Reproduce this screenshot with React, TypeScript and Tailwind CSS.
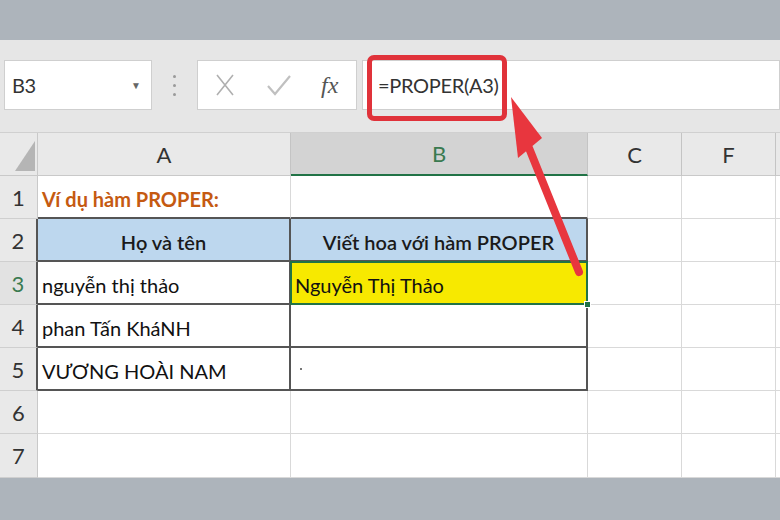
import React from "react";

const FONT = { fontFamily: "Lato, 'Noto Sans', 'Liberation Sans', sans-serif" };

const GRID = "border-[#d9d9d9]";

function ColHead({ label, active }: { label: string; active?: boolean }) {
  return (
    <div
      className={
        "flex items-center justify-center border-r border-[#c4c4c4] text-[22px] " +
        (active
          ? "bg-[#d3d3d3] text-[#3a7a50] border-b-2 border-b-[#217346]"
          : "bg-[#e9e9e9] text-[#333] border-b border-b-[#c9c9c9]")
      }
    >
      {label}
    </div>
  );
}

function RowHead({ n, dark, active }: { n: number; dark?: boolean; active?: boolean }) {
  return (
    <div
      className={
        "flex items-center justify-center border-b border-b-[#cfcfcf] text-[22px] " +
        (active ? "bg-[#e2e2e2] text-[#3a7a50] " : "bg-[#e9e9e9] text-[#333] ") +
        (dark ? "border-r-2 border-r-[#555]" : "border-r border-r-[#c9c9c9]")
      }
    >
      {n}
    </div>
  );
}

export default function App() {
  return (
    <div className="relative w-[780px] h-[520px] bg-[#adb4bb] flex flex-col overflow-hidden" style={FONT}>
      <div className="h-[40px] shrink-0" />
      {/* toolbar */}
      <div className="h-[93px] shrink-0 bg-[#e6e6e6] border-b border-[#d0d0d0] pt-[20px] pl-[4px] flex items-start">
        <div className="w-[148px] h-[50px] bg-white border border-[#cfcfcf] flex items-center pl-[7px] pr-[10px]">
          <span className="text-[20px] tracking-[-0.5px] text-[#333]">B3</span>
          <span className="ml-auto text-[10px] text-[#666]">▼</span>
        </div>
        <div className="w-[45px] h-[50px] flex flex-col items-center justify-center gap-[6px]">
          <span className="w-[3px] h-[3px] rounded-full bg-[#9a9a9a]" />
          <span className="w-[3px] h-[3px] rounded-full bg-[#9a9a9a]" />
          <span className="w-[3px] h-[3px] rounded-full bg-[#9a9a9a]" />
        </div>
        <div className="w-[160px] h-[50px] bg-white border border-[#cfcfcf] flex items-center">
          <svg width="20" height="24" viewBox="0 0 20 24" className="ml-[17px]">
            <path d="M2 2 L18 22 M18 2 L2 22" stroke="#b0b0b0" strokeWidth="1.6" fill="none" />
          </svg>
          <svg width="28" height="24" viewBox="0 0 28 24" className="ml-[30px]">
            <path d="M3 13 L10 21 L25 3" stroke="#c0c0c0" strokeWidth="2.2" fill="none" />
          </svg>
          <span
            className="ml-[28px] text-[24px] italic text-[#555]"
            style={{ fontFamily: "'Liberation Serif', 'DejaVu Serif', serif" }}
          >
            fx
          </span>
        </div>
        <div className="ml-[5px] flex-1 h-[50px] bg-white border border-[#cfcfcf] flex items-center pl-[15px]">
          <span className="text-[20px] tracking-[-0.3px] text-[#333]">=PROPER(A3)</span>
        </div>
      </div>

      {/* sheet */}
      <div className="grid grid-cols-[38px_253px_297px_94px_94px_1fr] grid-rows-[43px_43px_43px_43px_43px_43px_43px_44px] bg-white shrink-0">
        {/* header row */}
        <div className="relative bg-[#e9e9e9] border-r border-b border-[#c9c9c9]">
          <svg className="absolute left-0 top-0" width="38" height="43" viewBox="0 0 38 43">
            <path d="M15 38 L35 38 L35 8 Z" fill="#b5b5b5" />
          </svg>
        </div>
        <ColHead label="A" />
        <ColHead label="B" active />
        <ColHead label="C" />
        <ColHead label="F" />
        <div className="bg-[#e9e9e9] border-b border-[#c9c9c9]" />

        {/* row 1 */}
        <RowHead n={1} />
        <div className="flex items-center pl-[4px] pt-[4px] border-r border-r-[#d9d9d9] border-b-2 border-b-[#555] text-[20px] font-bold text-[#c55a11]">
          Ví dụ hàm PROPER:
        </div>
        <div className="border-r border-r-[#d9d9d9] border-b-2 border-b-[#555]" />
        <div className={"border-r border-b " + GRID} />
        <div className={"border-r border-b " + GRID} />
        <div className={"border-b " + GRID} />

        {/* row 2 */}
        <RowHead n={2} dark />
        <div className="flex items-center justify-center pt-[4px] bg-[#bdd7ee] border-r-2 border-b-2 border-[#555] text-[20px] font-semibold text-[#1a1a1a]">
          Họ và tên
        </div>
        <div className="flex items-center justify-center pt-[4px] bg-[#bdd7ee] border-r-2 border-b-2 border-[#555] text-[20px] font-semibold text-[#1a1a1a]">
          Viết hoa với hàm PROPER
        </div>
        <div className={"border-r border-b " + GRID} />
        <div className={"border-r border-b " + GRID} />
        <div className={"border-b " + GRID} />

        {/* row 3 */}
        <RowHead n={3} dark active />
        <div className="flex items-center pl-[4px] pt-[4px] border-r-2 border-b-2 border-[#555] text-[20px] text-[#111]">
          nguyễn thị thảo
        </div>
        <div className="relative flex items-center pl-[4px] pt-[4px] bg-[#f7e900] border-r-2 border-b-2 border-[#555] text-[20px] text-[#111]">
          Nguyễn Thị Thảo
          <div className="absolute -left-[1px] -top-[1px] -right-[2px] -bottom-[2px] border-2 border-[#217346] pointer-events-none" />
          <div className="absolute -right-[5px] -bottom-[5px] w-[7px] h-[7px] bg-[#217346] border border-white" />
        </div>
        <div className={"border-r border-b " + GRID} />
        <div className={"border-r border-b " + GRID} />
        <div className={"border-b " + GRID} />

        {/* row 4 */}
        <RowHead n={4} dark />
        <div className="flex items-center pl-[4px] pt-[4px] border-r-2 border-b-2 border-[#555] text-[20px] text-[#111]">
          phan Tấn KháNH
        </div>
        <div className="border-r-2 border-b-2 border-[#555]" />
        <div className={"border-r border-b " + GRID} />
        <div className={"border-r border-b " + GRID} />
        <div className={"border-b " + GRID} />

        {/* row 5 */}
        <RowHead n={5} dark />
        <div className="flex items-center pl-[4px] pt-[4px] border-r-2 border-b-2 border-[#555] text-[20px] text-[#111]">
          VƯƠNG HOÀI NAM
        </div>
        <div className="flex items-center pl-[9px] border-r-2 border-b-2 border-[#555]">
          <span className="w-[2px] h-[2px] bg-[#777]" />
        </div>
        <div className={"border-r border-b " + GRID} />
        <div className={"border-r border-b " + GRID} />
        <div className={"border-b " + GRID} />

        {/* row 6 */}
        <RowHead n={6} />
        <div className={"border-r border-b " + GRID} />
        <div className={"border-r border-b " + GRID} />
        <div className={"border-r border-b " + GRID} />
        <div className={"border-r border-b " + GRID} />
        <div className={"border-b " + GRID} />

        {/* row 7 */}
        <RowHead n={7} />
        <div className={"border-r border-b " + GRID} />
        <div className={"border-r border-b " + GRID} />
        <div className={"border-r border-b " + GRID} />
        <div className={"border-r border-b " + GRID} />
        <div className={"border-b " + GRID} />
      </div>
      <div className="flex-1" />

      {/* annotation: red box around formula */}
      <div className="absolute left-[367px] top-[55px] w-[140px] h-[66px] border-[5px] border-[#e0323a] rounded-[7px] pointer-events-none" />
      {/* annotation: red arrow */}
      <svg className="absolute left-0 top-0 pointer-events-none" width="780" height="520" viewBox="0 0 780 520">
        <path d="M579 272 L529 148" stroke="#e8363e" strokeWidth="8" strokeLinecap="round" fill="none" />
        <path d="M511 97 L542 138 L518 158 Z" fill="#e8363e" />
      </svg>
    </div>
  );
}
